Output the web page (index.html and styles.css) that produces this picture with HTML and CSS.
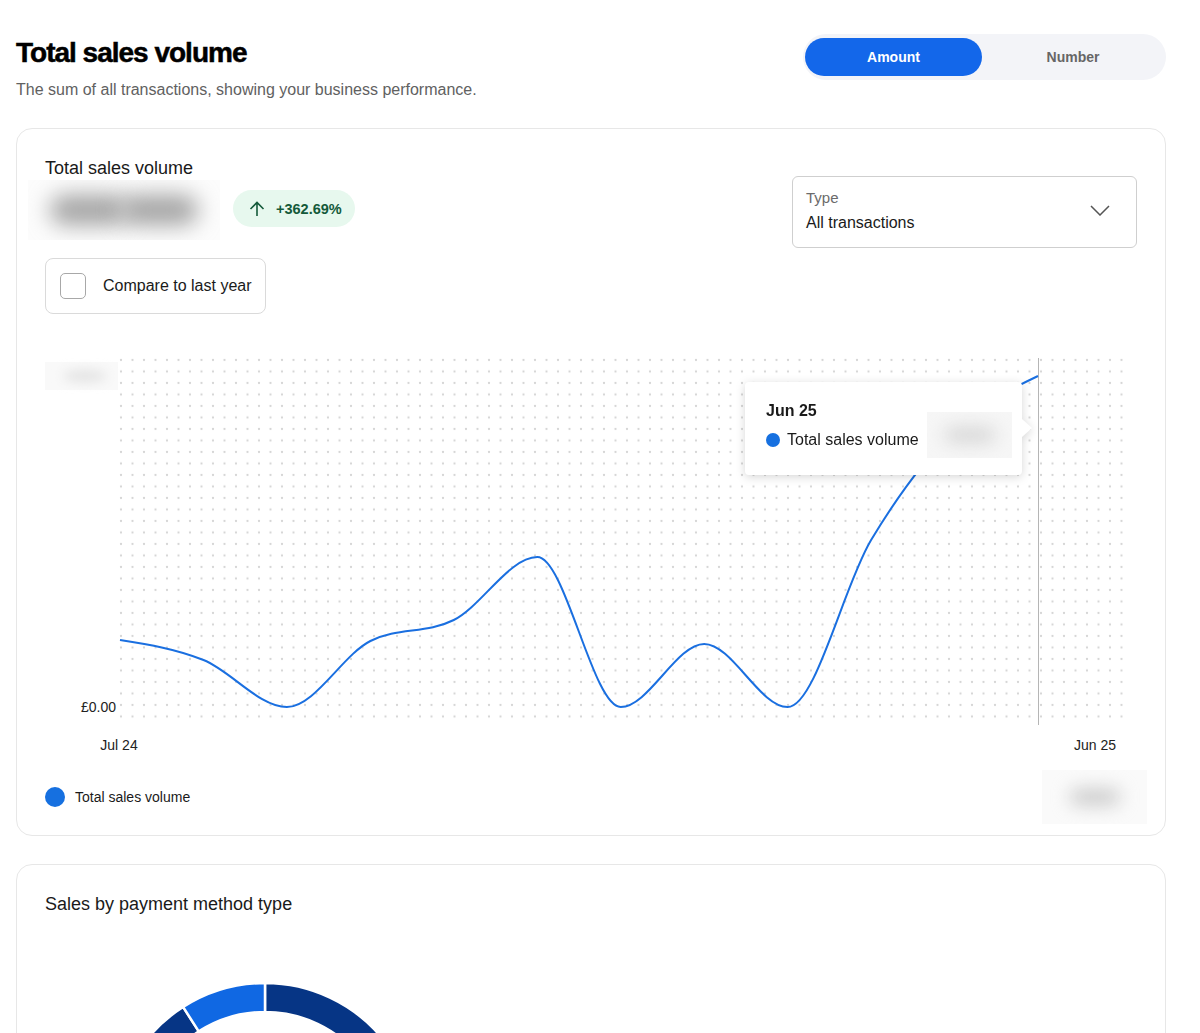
FILE: index.html
```html
<!DOCTYPE html>
<html lang="en">
<head>
    <meta charset="UTF-8">
    <meta name="viewport" content="width=device-width, initial-scale=1.0">
    <title>Total sales volume</title>
    <link rel="stylesheet" href="styles.css">
</head>
<body>
    <div class="page">
        <div class="page-header">
            <div>
                <h1 class="page-title">Total sales volume</h1>
                <p class="page-subtitle">The sum of all transactions, showing your business performance.</p>
            </div>
            <div class="toggle">
                <button class="toggle-btn active">Amount</button>
                <button class="toggle-btn">Number</button>
            </div>
        </div>

        <section class="card">
            <div class="card-top">
                <div>
                    <h2 class="card-title">Total sales volume</h2>
                    <div class="amount-row">
                        <div class="blur-box amount-blur"><span class="blob"></span><span class="blob"></span></div>
                        <span class="badge">
                            <svg width="16" height="16" viewBox="0 0 16 16"><path d="M8 15V1.5M1.5 8L8 1.5 14.5 8" fill="none" stroke="currentColor" stroke-width="1.6"/></svg>
                            +362.69%
                        </span>
                    </div>
                    <label class="compare"><span class="checkbox"></span>Compare to last year</label>
                </div>
                <div class="select">
                    <div>
                        <div class="select-label">Type</div>
                        <div class="select-value">All transactions</div>
                    </div>
                    <svg width="20" height="11" viewBox="0 0 20 11"><path d="M1 1l9 9 9-9" fill="none" stroke="#555" stroke-width="1.5"/></svg>
                </div>
            </div>

            <div class="chart">
                <svg class="chart-svg" width="1092" height="420">
                    <defs>
                        <pattern id="dots" patternUnits="userSpaceOnUse" x="70.25" y="9.25" width="11.5" height="11.5">
                            <circle cx="5.75" cy="5.75" r="1.1" fill="#d4d4d4"/>
                        </pattern>
                        <filter id="soft" x="-50%" y="-100%" width="200%" height="300%">
                            <feGaussianBlur stdDeviation="6"/>
                        </filter>
                    </defs>
                    <rect x="70.25" y="9.25" width="1012" height="368" fill="url(#dots)"/>
                    <rect x="0" y="17" width="73" height="28" fill="#f9f9f9"/>
                    <ellipse cx="40" cy="31" rx="22" ry="6" fill="#e2e2e2" filter="url(#soft)"/>
                    <text class="axis-label" x="71" y="367" text-anchor="end">£0.00</text>
                    <text class="axis-label" x="74" y="405" text-anchor="middle">Jul 24</text>
                    <text class="axis-label" x="1050" y="405" text-anchor="middle">Jun 25</text>
                    <line x1="993.5" y1="13" x2="993.5" y2="380" stroke="#b5b5b5" stroke-width="1"/>
                    <path id="sales-line" d="" fill="none" stroke="#1a6fe0" stroke-width="2"/>
                </svg>
                <div class="tooltip">
                    <div class="tooltip-date">Jun 25</div>
                    <div class="tooltip-row">
                        <span class="tooltip-label"><span class="dot small"></span>Total sales volume</span>
                        <div class="blur-box tip-blur"><span class="blob"></span></div>
                    </div>
                </div>
            </div>

            <div class="legend">
                <span class="legend-item"><span class="dot"></span>Total sales volume</span>
                <div class="blur-box legend-blur"><span class="blob"></span></div>
            </div>
        </section>

        <section class="card payments">
            <h2 class="card-title">Sales by payment method type</h2>
            <svg class="donut" width="304" height="304" viewBox="0 0 304 304">
                <path d="M152 0A152 152 0 1 1 64.81 276.5L81.45 252.76A123 123 0 1 0 152 29Z" fill="#063585" stroke="#fff" stroke-width="2.5"/>
                <path d="M64.81 276.5A152 152 0 0 1 70.1 23.94L85.73 48.37A123 123 0 0 0 81.45 252.76Z" fill="#063585" stroke="#fff" stroke-width="2.5"/>
                <path d="M70.1 23.94A152 152 0 0 1 152 0L152 29A123 123 0 0 0 85.73 48.37Z" fill="#1068e3" stroke="#fff" stroke-width="2.5"/>
            </svg>
        </section>
    </div>

    <script>
        // monthly values, Jul 24 .. Jun 25 (already in chart pixels)
        var values = [295, 315, 362, 296, 275, 212, 362, 299, 362, 195, 85, 31];
        var left = 75, right = 993;

        function monotonePath(pts) {
            var n = pts.length;
            var h = pts[1][0] - pts[0][0];
            var s = [], m = [];
            for (var i = 0; i < n - 1; i++) s.push((pts[i + 1][1] - pts[i][1]) / h);
            for (var i = 1; i < n - 1; i++) {
                var a = s[i - 1], b = s[i];
                m[i] = (Math.sign(a) + Math.sign(b)) * Math.min(Math.abs(a), Math.abs(b), 0.5 * Math.abs((a + b) / 2)) || 0;
            }
            m[0] = (3 * s[0] - m[1]) / 2;
            m[n - 1] = (3 * s[n - 2] - m[n - 2]) / 2;
            var dx = h / 3;
            var d = 'M' + pts[0][0] + ',' + pts[0][1];
            for (var i = 0; i < n - 1; i++) {
                d += ' C' + (pts[i][0] + dx).toFixed(1) + ',' + (pts[i][1] + m[i] * dx).toFixed(1) +
                     ' ' + (pts[i + 1][0] - dx).toFixed(1) + ',' + (pts[i + 1][1] - m[i + 1] * dx).toFixed(1) +
                     ' ' + pts[i + 1][0].toFixed(1) + ',' + pts[i + 1][1];
            }
            return d;
        }

        var step = (right - left) / (values.length - 1);
        var pts = values.map(function (v, i) { return [left + i * step, v]; });
        document.getElementById('sales-line').setAttribute('d', monotonePath(pts));
    </script>
</body>
</html>
```

FILE: styles.css
```css
body {
    margin: 0;
    font-family: "Liberation Sans", Arial, sans-serif;
    color: #1a1a1a;
    background-color: #fff;
    overflow: hidden;
}
.page {
    width: 1150px;
    margin-left: 16px;
}
.page-header {
    display: flex;
    justify-content: space-between;
    align-items: flex-start;
    padding-top: 34px;
}
.page-title {
    margin: 2px 0 0;
    font-size: 28px;
    line-height: 34px;
    font-weight: 700;
    letter-spacing: -1px;
    color: #000;
    -webkit-text-stroke: 0.5px #000;
}
.page-subtitle {
    margin: 10px 0 0;
    font-size: 16px;
    line-height: 20px;
    color: #616161;
}
.toggle {
    display: flex;
    width: 363px;
    box-sizing: border-box;
    padding: 4px 2px;
    background-color: #f3f4f8;
    border-radius: 23px;
}
.toggle-btn {
    flex: 1;
    height: 38px;
    border: none;
    border-radius: 19px;
    background: transparent;
    font-family: "Liberation Sans", Arial, sans-serif;
    font-size: 14px;
    font-weight: 700;
    color: #666;
}
.toggle-btn.active {
    flex: 0 0 177px;
    background-color: #1367ea;
    color: #fff;
}
.card {
    margin-top: 28px;
    border: 1px solid #e7e7e7;
    border-radius: 16px;
    padding: 27px 28px 10px;
}
.card-top {
    display: flex;
    justify-content: space-between;
    align-items: flex-start;
}
.card-title {
    margin: 0;
    font-size: 18px;
    line-height: 24px;
    font-weight: 400;
}
.amount-row {
    display: flex;
    align-items: center;
    gap: 13px;
    height: 60px;
}
.blur-box {
    display: flex;
    align-items: center;
    justify-content: center;
    overflow: hidden;
    background-color: #fafafa;
}
.blob {
    display: block;
    border-radius: 20px;
    filter: blur(9px);
}
.amount-blur {
    width: 192px;
    height: 60px;
    margin-left: -17px;
    background-color: #fcfcfc;
}
.amount-blur .blob {
    width: 78px;
    height: 30px;
    margin: 0 -4px;
    background-color: #a3a3a3;
    filter: blur(11px);
}
.badge {
    display: inline-flex;
    align-items: center;
    gap: 11px;
    height: 37px;
    margin-top: -3px;
    padding: 0 13px 0 16px;
    border-radius: 19px;
    background-color: #e7f8ee;
    color: #145a3a;
    font-size: 14.5px;
    font-weight: 700;
}
.compare {
    display: inline-flex;
    align-items: center;
    gap: 17px;
    height: 56px;
    margin-top: 18px;
    box-sizing: border-box;
    padding: 0 13px 0 14px;
    border: 1px solid #dadada;
    border-radius: 8px;
    font-size: 16px;
}
.checkbox {
    width: 26px;
    height: 26px;
    box-sizing: border-box;
    border: 1px solid #a8a8a8;
    border-radius: 5px;
}
.select {
    display: flex;
    align-items: center;
    justify-content: space-between;
    width: 345px;
    height: 72px;
    margin-top: 20px;
    box-sizing: border-box;
    padding: 0 26px 3px 13px;
    border: 1px solid #cfcfcf;
    border-radius: 6px;
}
.select-label {
    font-size: 15px;
    line-height: 22px;
    color: #6b6b6b;
}
.select-value {
    margin-top: 3px;
    font-size: 16px;
    line-height: 22px;
}
.chart {
    position: relative;
    height: 420px;
    margin-top: 31px;
}
.chart-svg {
    display: block;
}
.axis-label {
    font-size: 14px;
    fill: #222;
}
.tooltip {
    position: absolute;
    left: 700px;
    top: 37px;
    width: 277px;
    height: 93px;
    box-sizing: border-box;
    padding: 19px 10px 0 21px;
    background-color: #fff;
    border-radius: 4px;
    filter: drop-shadow(0 2px 5px rgba(0, 0, 0, 0.16));
}
.tooltip::after {
    content: "";
    position: absolute;
    right: -10px;
    top: 37px;
    border-left: 10px solid #fff;
    border-top: 9px solid transparent;
    border-bottom: 9px solid transparent;
}
.tooltip-date {
    font-size: 16px;
    line-height: 20px;
    font-weight: 700;
}
.tooltip-row {
    display: flex;
    align-items: center;
    height: 46px;
    margin-top: -9px;
}
.tooltip-label {
    display: flex;
    align-items: center;
    padding-top: 10px;
    font-size: 16px;
}
.tip-blur {
    width: 85px;
    height: 46px;
    margin-left: auto;
    background-color: #f6f6f6;
}
.tip-blur .blob {
    width: 50px;
    height: 14px;
    background-color: #d2d2d2;
}
.dot {
    display: inline-block;
    width: 20px;
    height: 20px;
    margin-right: 10px;
    border-radius: 50%;
    background-color: #1670e0;
}
.dot.small {
    width: 14px;
    height: 14px;
    margin-right: 7px;
}
.legend {
    display: flex;
    align-items: center;
    justify-content: space-between;
    height: 57px;
    margin-top: 3px;
}
.legend-item {
    display: flex;
    align-items: center;
    font-size: 14px;
}
.legend-blur {
    width: 105px;
    height: 54px;
    margin-right: -10px;
}
.legend-blur .blob {
    width: 50px;
    height: 16px;
    background-color: #c9c9c9;
}
.payments {
    height: 400px;
}
.donut {
    display: block;
    margin: 67px 0 0 68px;
}
```
